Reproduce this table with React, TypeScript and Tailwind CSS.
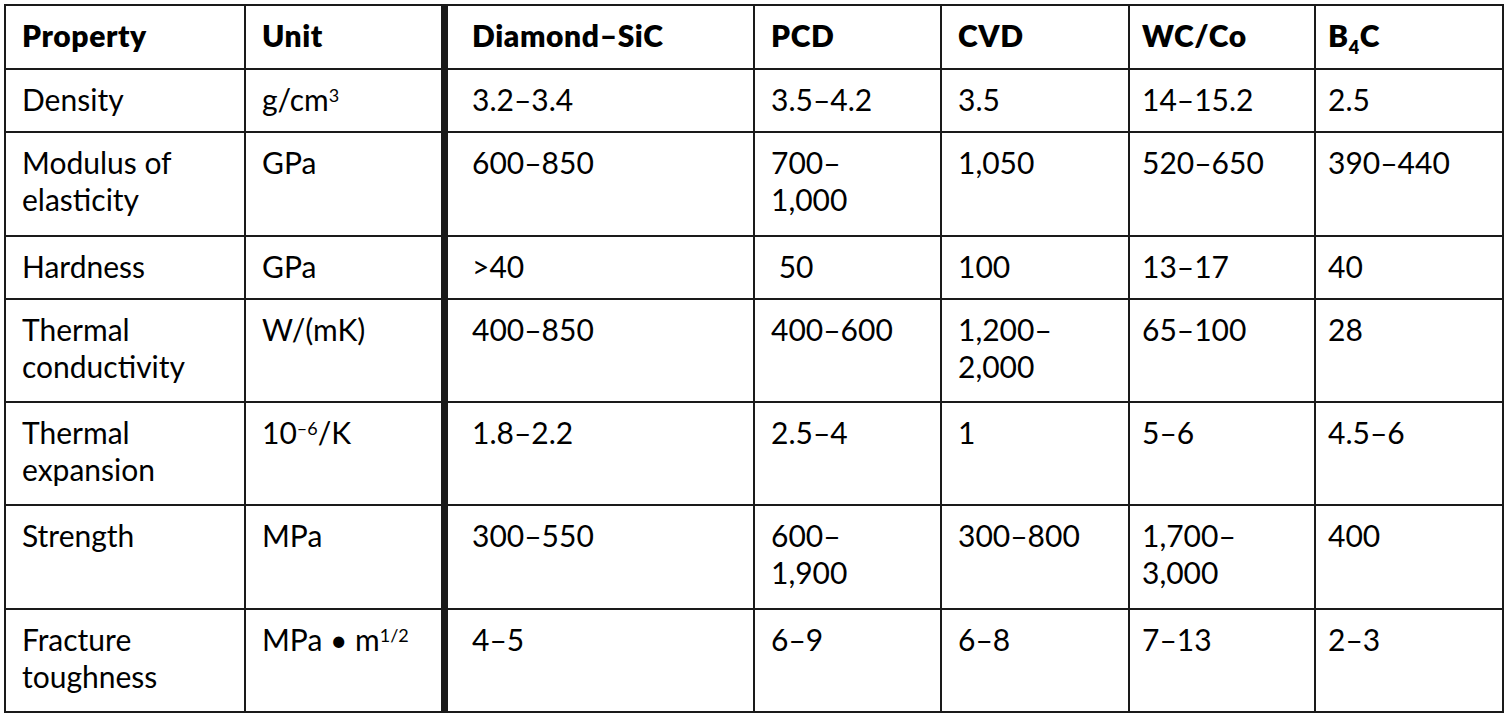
import React from 'react';

type Row = {
    label: React.ReactNode;
    unit: React.ReactNode;
    values: React.ReactNode[];
    h: string;
};

const Sup: React.FC<{ children: React.ReactNode }> = ({ children }) => (
    <span className="text-[0.6em] align-[0.5em] leading-none">{children}</span>
);

const rows: Row[] = [
    { label: 'Density', unit: <>g/cm<Sup>3</Sup></>, values: ['3.2–3.4', '3.5–4.2', '3.5', '14–15.2', '2.5'], h: 'h-[63px]' },
    { label: <>Modulus of<br />elasticity</>, unit: 'GPa', values: ['600–850', <>700–<br />1,000</>, '1,050', '520–650', '390–440'], h: 'h-[104px]' },
    { label: 'Hardness', unit: 'GPa', values: ['>40', '\u00a050', '100', '13–17', '40'], h: 'h-[63px]' },
    { label: <>Thermal<br />conductivity</>, unit: 'W/(mK)', values: ['400–850', '400–600', <>1,200–<br />2,000</>, '65–100', '28'], h: 'h-[103px]' },
    { label: <>Thermal<br />expansion</>, unit: <>10<Sup>–6</Sup>/K</>, values: ['1.8–2.2', '2.5–4', '1', '5–6', '4.5–6'], h: 'h-[103px]' },
    { label: 'Strength', unit: 'MPa', values: ['300–550', <>600–<br />1,900</>, '300–800', <>1,700–<br />3,000</>, '400'], h: 'h-[104px]' },
    { label: <>Fracture<br />toughness</>, unit: <>MPa • m<Sup>1/2</Sup></>, values: ['4–5', '6–9', '6–8', '7–13', '2–3'], h: 'h-[103px]' },
];

// left padding per material column
const valuePad = ['pl-6', 'pl-4', 'pl-4', 'pl-3', 'pl-3'];

const App: React.FC = () => {
    return (
        <div className="w-[1510px] h-[718px] bg-white p-1 text-black font-['Lato','Open_Sans',sans-serif]">
            <table className="table-fixed border-separate border-spacing-0 border-t-2 border-l-2 border-[#1a1a1a] text-[30px] leading-[37px]">
                <thead>
                    <tr className="h-[64px]">
                        <th className="w-[240px] border-r-2 border-b-2 border-[#1a1a1a] pl-4 pt-[11px] text-left align-top font-extrabold tracking-[0.02em]">Property</th>
                        <th className="w-[202px] border-r-[7px] border-b-2 border-[#1a1a1a] pl-4 pt-[11px] text-left align-top font-extrabold tracking-[0.02em]">Unit</th>
                        <th className="w-[307px] border-r-2 border-b-2 border-[#1a1a1a] pl-6 pt-[11px] text-left align-top font-extrabold tracking-[0.02em]">Diamond–SiC</th>
                        <th className="w-[187px] border-r-2 border-b-2 border-[#1a1a1a] pl-4 pt-[11px] text-left align-top font-extrabold tracking-[0.02em]">PCD</th>
                        <th className="w-[188px] border-r-2 border-b-2 border-[#1a1a1a] pl-4 pt-[11px] text-left align-top font-extrabold tracking-[0.02em]">CVD</th>
                        <th className="w-[186px] border-r-2 border-b-2 border-[#1a1a1a] pl-3 pt-[11px] text-left align-top font-extrabold tracking-[0.02em]">WC/Co</th>
                        <th className="w-[188px] border-r-2 border-b-2 border-[#1a1a1a] pl-3 pt-[11px] text-left align-top font-extrabold tracking-[0.02em]">
                            B<span className="text-[0.6em] align-[-0.4em] leading-none">4</span>C
                        </th>
                    </tr>
                </thead>
                <tbody>
                    {rows.map((r, i) => (
                        <tr key={i} className={r.h}>
                            <td className="border-r-2 border-b-2 border-[#1a1a1a] pl-4 pt-[11px] align-top">{r.label}</td>
                            <td className="border-r-[7px] border-b-2 border-[#1a1a1a] pl-4 pt-[11px] align-top whitespace-nowrap">{r.unit}</td>
                            {r.values.map((v, j) => (
                                <td key={j} className={`border-r-2 border-b-2 border-[#1a1a1a] ${valuePad[j]} pt-[11px] align-top`}>{v}</td>
                            ))}
                        </tr>
                    ))}
                </tbody>
            </table>
        </div>
    );
};

export default App;
